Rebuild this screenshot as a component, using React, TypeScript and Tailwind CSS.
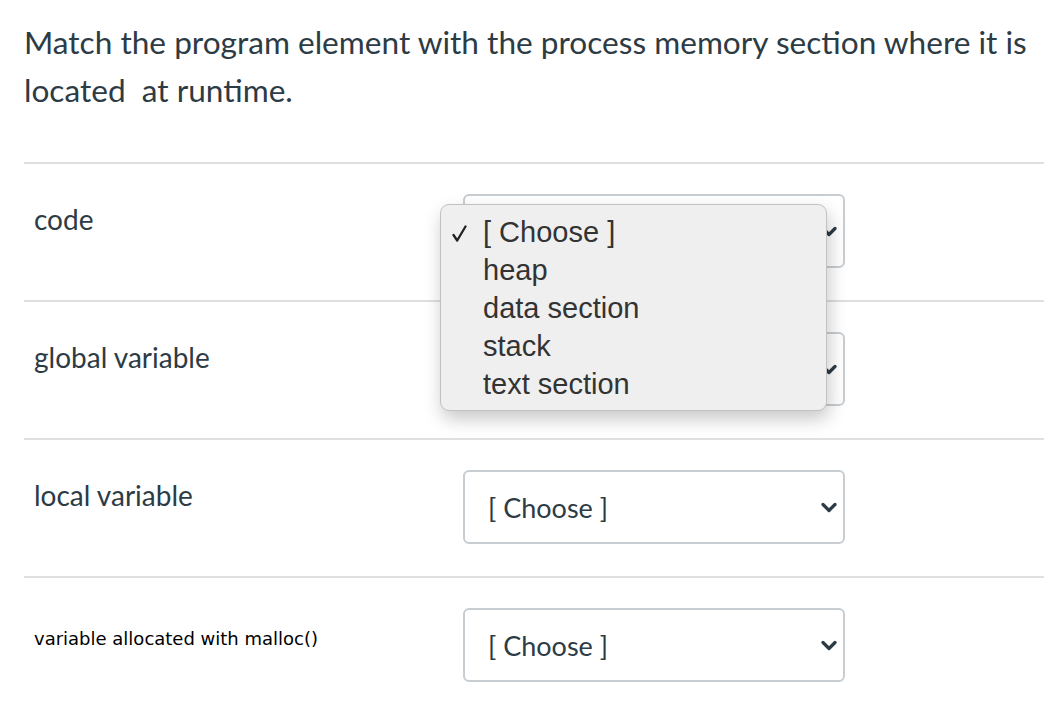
import React from "react";

type Row = {
  label: string;
  small?: boolean;
};

const rows: Row[] = [
  { label: "code" },
  { label: "global variable" },
  { label: "local variable" },
  { label: "variable allocated with malloc()", small: true },
];

const options = ["[ Choose ]", "heap", "data section", "stack", "text section"];

const Chevron = () => (
  <svg width="16" height="11" viewBox="0 0 16 11" className="shrink-0">
    <polyline
      points="2,2.5 8,8.5 14,2.5"
      fill="none"
      stroke="#2d3b45"
      strokeWidth="3.2"
      strokeLinecap="round"
      strokeLinejoin="round"
    />
  </svg>
);

const Check = () => (
  <svg width="15" height="17" viewBox="0 0 15 17">
    <path d="M1.5 10 L5.2 15.5 L13.5 1.5" fill="none" stroke="#222" strokeWidth="2.3" strokeLinecap="round" strokeLinejoin="round" />
  </svg>
);

const SelectBox = () => (
  <div className="w-[382px] h-[74px] border-2 border-[#c7cdd1] rounded-[6px] bg-white flex items-center pl-[23px] pr-[6px] justify-between">
    <span className="text-[27px] text-[#2d3b45] font-['Lato',sans-serif] translate-y-[1px]">[ Choose ]</span>
    <Chevron />
  </div>
);

// Native menu that drops open over the first select
const OpenMenu = () => (
  <div className="absolute left-[416px] top-[42px] w-[387px] h-[207px] bg-[#efefef] border border-[#c2c2c2] rounded-[9px] shadow-[2px_8px_18px_rgba(0,0,0,0.22)] pt-[9px] font-['Liberation_Sans',Arial,sans-serif] text-[29px] text-[#333]">
    {options.map((o, i) => (
      <div key={o} className="h-[38px] flex items-center">
        <span className="w-[42px] pl-[11px] flex items-center">{i === 0 ? <Check /> : null}</span>
        <span>{o}</span>
      </div>
    ))}
  </div>
);

export default function App() {
  return (
    <div className="bg-white w-[1044px] h-[704px] overflow-hidden pl-[24px] font-['Lato',sans-serif] text-[#2d3b45]">
      <h1 className="pt-[18px] text-[31.6px] leading-[48px] pr-[4px]">
        Match the program element with the process memory section where it is located&nbsp; at runtime.
      </h1>
      <div className="mt-[48px] relative">
        {rows.map((r, i) => (
          <div key={i} className="h-[138px] border-t-2 border-[#dfdfdf] flex">
            <div className="w-[439px] pl-[10px]">
              {r.small ? (
                <p className="pt-[47px] text-[18px] text-black font-['DejaVu_Sans',Verdana,sans-serif]">{r.label}</p>
              ) : (
                <p className="pt-[36px] text-[28px] leading-[38px]">{r.label}</p>
              )}
            </div>
            <div className="pt-[30px]">
              <SelectBox />
            </div>
          </div>
        ))}
        <OpenMenu />
      </div>
    </div>
  );
}
